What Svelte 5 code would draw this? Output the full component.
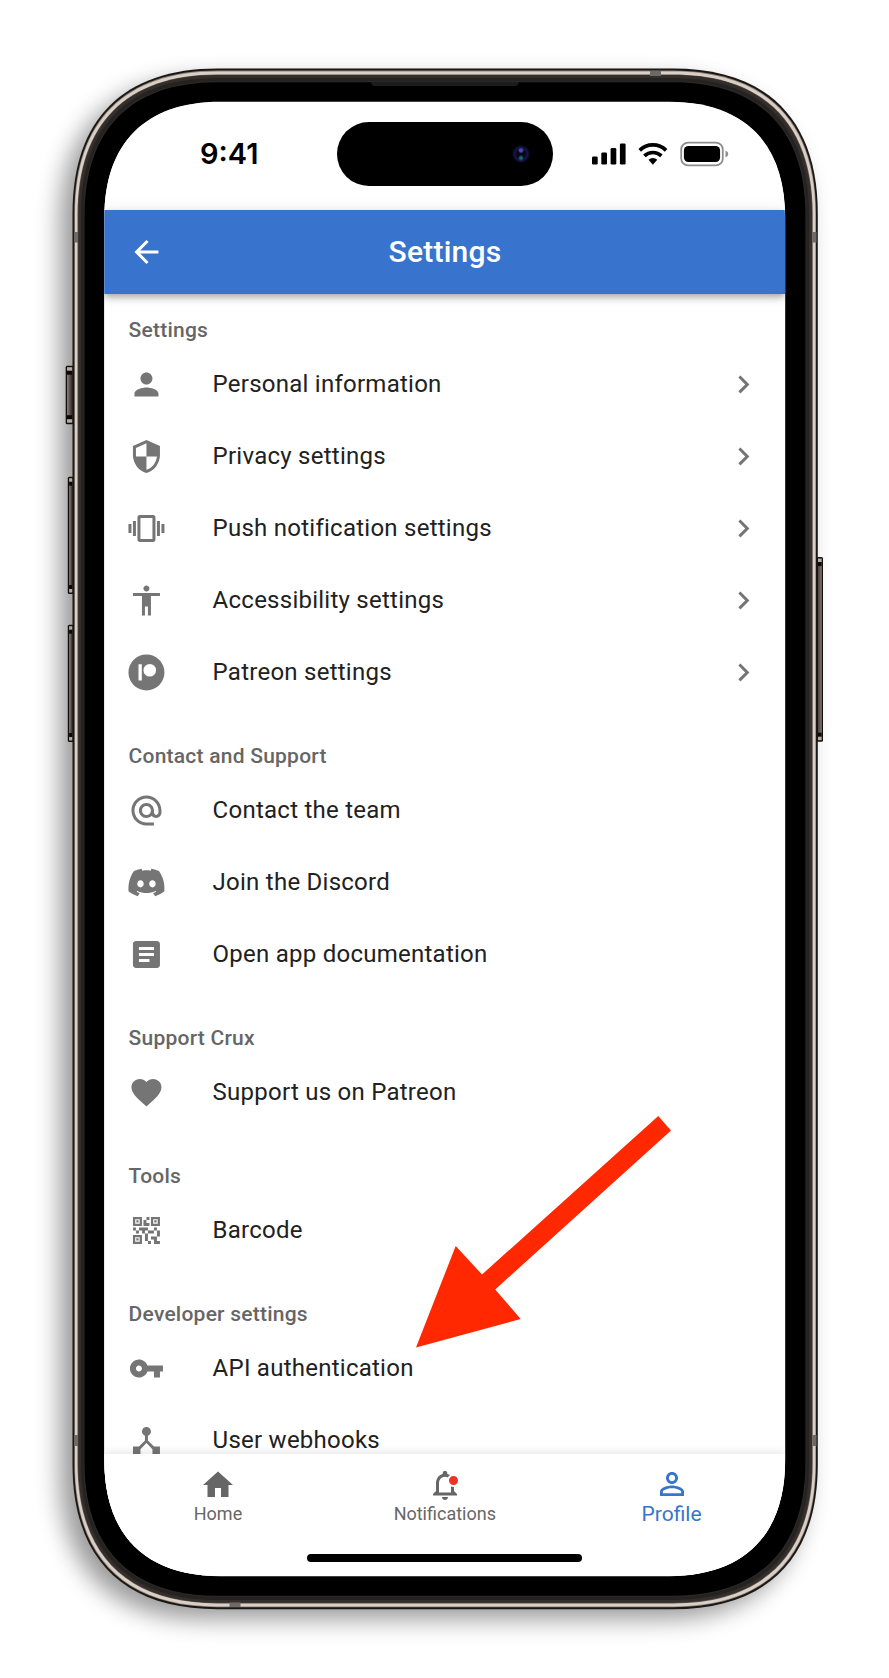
<script>
  // Rounded rectangle with continuous-curvature corners.
  function squircle(x0, y0, x1, y1, r, c) {
    const k = r * (1 - c);
    return `M${x0 + r} ${y0}H${x1 - r}C${x1 - k} ${y0} ${x1} ${y0 + k} ${x1} ${y0 + r}V${y1 - r}C${x1} ${y1 - k} ${x1 - k} ${y1} ${x1 - r} ${y1}H${x0 + r}C${x0 + k} ${y1} ${x0} ${y1 - k} ${x0} ${y1 - r}V${y0 + r}C${x0} ${y0 + k} ${x0 + k} ${y0} ${x0 + r} ${y0}Z`;
  }

  const layers = [
    { d: squircle(72.5, 68.6, 817.8, 1609.2, 145, 0.65), fill: '#1b1714' },
    { d: squircle(74.3, 70.6, 816, 1607.2, 143, 0.65), fill: '#8f857c' },
    { d: squircle(75, 71.4, 815.3, 1606.4, 142.3, 0.65), fill: '#d9cfc6' },
    { d: squircle(77.5, 74.4, 812.7, 1603.4, 140, 0.65), fill: '#5a514b' },
    { d: squircle(78.3, 75.1, 811.9, 1602.7, 139, 0.65), fill: '#332e2b' },
    { d: squircle(81, 78, 809, 1600, 136.5, 0.65), fill: '#252220' },
    { d: squircle(83.4, 81, 806.6, 1597, 134, 0.65), fill: '#2a2929' },
    { d: squircle(84.6, 82.2, 805.4, 1595.8, 133, 0.65), fill: '#000' },
    { d: squircle(104.3, 101.8, 785.2, 1576.2, 116, 0.645), fill: '#fff' }
  ];
  const screenClip = squircle(0.3, 0, 681, 1474, 116, 0.645);

  const bands = [
    [650, 71, 11, 5], [229.5, 1602.5, 11, 4.5],
    [74, 232, 4, 10.5], [812.5, 232, 4, 10.5],
    [74, 1435, 4, 11], [812.5, 1435, 4, 11]
  ];
  const keys = [
    { x: 65.7, y: 365.7, w: 8, h: 58.5 },
    { x: 67.8, y: 476.7, w: 6, h: 117.3 },
    { x: 67.8, y: 624.7, w: 6, h: 117.3 },
    { x: 816.7, y: 557, w: 6.3, h: 184.7 }
  ];

  const icons = {
    back: 'M20 11H7.83l5.59-5.59L12 4l-8 8 8 8 1.41-1.41L7.83 13H20v-2z',
    chevron: 'M10 6L8.59 7.41 13.17 12l-4.58 4.59L10 18l6-6z',
    person: 'M12 12c2.21 0 4-1.79 4-4s-1.79-4-4-4-4 1.79-4 4 1.79 4 4 4zm0 2c-2.67 0-8 1.34-8 4v2h16v-2c0-2.66-5.33-4-8-4z',
    shield: 'M12 1L3 5v6c0 5.55 3.84 10.74 9 12 5.16-1.26 9-6.45 9-12V5l-9-4zm0 10.99h7c-.53 4.12-3.28 7.79-7 8.94V12H5V6.3l7-3.11v8.8z',
    vibration: 'M0 15h2V9H0v6zm3 2h2V7H3v10zm19-8v6h2V9h-2zm-3 8h2V7h-2v10zM16.5 3h-9C6.67 3 6 3.67 6 4.5v15c0 .83.67 1.5 1.5 1.5h9c.83 0 1.5-.67 1.5-1.5v-15c0-.83-.67-1.5-1.5-1.5zM16 19H8V5h8v14z',
    accessibility: 'M12 2c1.1 0 2 .9 2 2s-.9 2-2 2-2-.9-2-2 .9-2 2-2zm9 7h-6v13h-2v-6h-2v6H9V9H3V7h18v2z',
    patreon: 'M12 0a12 12 0 1 0 0 24a12 12 0 1 0 0-24zM6.7 6.5h2.2v10.9H6.7zM14.2 6.3a4.2 4.2 0 1 1 0 8.4a4.2 4.2 0 1 1 0-8.4z',
    email: 'M12 1.95c-5.52 0-10 4.48-10 10s4.48 10 10 10h5v-2h-5c-4.34 0-8-3.66-8-8s3.66-8 8-8 8 3.66 8 8v1.43c0 .79-.71 1.57-1.5 1.57s-1.5-.78-1.5-1.57v-1.43c0-2.76-2.24-5-5-5s-5 2.24-5 5 2.24 5 5 5c1.38 0 2.64-.56 3.54-1.47.65.89 1.77 1.47 2.96 1.47 1.97 0 3.5-1.6 3.5-3.57v-1.43c0-5.52-4.48-10-10-10zm0 13c-1.66 0-3-1.34-3-3s1.34-3 3-3 3 1.34 3 3-1.34 3-3 3z',
    discord: 'M20.317 4.3698a19.7913 19.7913 0 00-4.8851-1.5152.0741.0741 0 00-.0785.0371c-.211.3753-.4447.8648-.6083 1.2495-1.8447-.2762-3.68-.2762-5.4868 0-.1636-.3933-.4058-.8742-.6177-1.2495a.077.077 0 00-.0785-.037 19.7363 19.7363 0 00-4.8852 1.515.0699.0699 0 00-.0321.0277C.5334 9.0458-.319 13.5799.0992 18.0578a.0824.0824 0 00.0312.0561c2.0528 1.5076 4.0413 2.4228 5.9929 3.0294a.0777.0777 0 00.0842-.0276c.4616-.6304.8731-1.2952 1.226-1.9942a.076.076 0 00-.0416-.1057c-.6528-.2476-1.2743-.5495-1.8722-.8923a.077.077 0 01-.0076-.1277c.1258-.0943.2517-.1923.3718-.2914a.0743.0743 0 01.0776-.0105c3.9278 1.7933 8.18 1.7933 12.0614 0a.0739.0739 0 01.0785.0095c.1202.099.246.1981.3728.2924a.077.077 0 01-.0066.1276 12.2986 12.2986 0 01-1.873.8914.0766.0766 0 00-.0407.1067c.3604.698.7719 1.3628 1.225 1.9932a.076.076 0 00.0842.0286c1.961-.6067 3.9495-1.5219 6.0023-3.0294a.077.077 0 00.0313-.0552c.5004-5.177-.8382-9.6739-3.5485-13.6604a.061.061 0 00-.0312-.0286zM8.02 15.3312c-1.1825 0-2.1569-1.0857-2.1569-2.419 0-1.3332.9555-2.4189 2.157-2.4189 1.2108 0 2.1757 1.0952 2.1568 2.419 0 1.3332-.9555 2.4189-2.1569 2.4189zm7.9748 0c-1.1825 0-2.1569-1.0857-2.1569-2.419 0-1.3332.9554-2.4189 2.1569-2.4189 1.2108 0 2.1757 1.0952 2.1568 2.419 0 1.3332-.946 2.4189-2.1568 2.4189Z',
    article: 'M19 3H5c-1.1 0-2 .9-2 2v14c0 1.1.9 2 2 2h14c1.1 0 2-.9 2-2V5c0-1.1-.9-2-2-2zm-5 14H7v-2h7v2zm3-4H7v-2h10v2zm0-4H7V7h10v2z',
    heart: 'M12 21.35l-1.45-1.32C5.4 15.36 2 12.28 2 8.5 2 5.42 4.42 3 7.5 3c1.74 0 3.41.81 4.5 2.09C13.09 3.81 14.76 3 16.5 3 19.58 3 22 5.42 22 8.5c0 3.78-3.4 6.86-8.55 11.54L12 21.35z',
    qr: 'M15 21h-2v-2h2v2zm-2-7h-2v5h2v-5zm8-2h-2v4h2v-4zm-2-2h-2v2h2v-2zM7 12H5v2h2v-2zm-2-2H3v2h2v-2zm7-5h2V3h-2v2zm-7.5-.5v3h3v-3h-3zM9 9H3V3h6v6zm-4.5 7.5v3h3v-3h-3zM9 21H3v-6h6v6zm7.5-16.5v3h3v-3h-3zM21 9h-6V3h6v6zm-2 10v-3h-4v2h2v3h4v-2h-2zm-2-7h-4v2h4v-2zm-4-2H7v2h2v2h2v-2h2v-2zm1-1V7h-2V5h-2v4h4zM6.75 5.25h-1.5v1.5h1.5v-1.5zm0 12h-1.5v1.5h1.5v-1.5zm12-12h-1.5v1.5h1.5v-1.5z',
    key: 'M12.65 10C11.83 7.67 9.61 6 7 6c-3.31 0-6 2.69-6 6s2.69 6 6 6c2.61 0 4.83-1.67 5.65-4H17v4h4v-4h2v-4H12.65zM7 14c-1.1 0-2-.9-2-2s.9-2 2-2 2 .9 2 2-.9 2-2 2z',
    hub: 'M17 16l-4-4V8.82C14.16 8.4 15 7.3 15 6c0-1.66-1.34-3-3-3S9 4.34 9 6c0 1.3.84 2.4 2 2.82V12l-4 4H3v5h5v-3.05l4-4.2 4 4.2V21h5v-5h-4z',
    home: 'M10 20v-6h4v6h5v-8h3L12 3 2 12h3v8z',
    bell: 'M12 22c1.1 0 2-.9 2-2h-4c0 1.1.89 2 2 2zm6-6v-5c0-3.07-1.64-5.64-4.5-6.32V4c0-.83-.67-1.5-1.5-1.5s-1.5.67-1.5 1.5v.68C7.63 5.36 6 7.92 6 11v5l-2 2v1h16v-1l-2-2zm-2 1H8v-6c0-2.48 1.51-4.5 4-4.5s4 2.02 4 4.5v6z',
    profile: 'M12 5.9c1.16 0 2.1.94 2.1 2.1s-.94 2.1-2.1 2.1S9.9 9.16 9.9 8s.94-2.1 2.1-2.1m0 9c2.97 0 6.1 1.46 6.1 2.1v1.1H5.9V17c0-.64 3.13-2.1 6.1-2.1M12 4C9.79 4 8 5.79 8 8s1.79 4 4 4 4-1.79 4-4-1.79-4-4-4zm0 9c-2.67 0-8 1.34-8 4v3h16v-3c0-2.66-5.33-4-8-4z'
  };

  const sections = [
    {
      title: 'Settings',
      items: [
        { icon: 'person', label: 'Personal information', nested: true },
        { icon: 'shield', label: 'Privacy settings', nested: true },
        { icon: 'vibration', label: 'Push notification settings', nested: true },
        { icon: 'accessibility', label: 'Accessibility settings', nested: true },
        { icon: 'patreon', label: 'Patreon settings', nested: true }
      ]
    },
    {
      title: 'Contact and Support',
      items: [
        { icon: 'email', label: 'Contact the team' },
        { icon: 'discord', label: 'Join the Discord' },
        { icon: 'article', label: 'Open app documentation' }
      ]
    },
    { title: 'Support Crux', items: [{ icon: 'heart', label: 'Support us on Patreon' }] },
    { title: 'Tools', items: [{ icon: 'qr', label: 'Barcode' }] },
    {
      title: 'Developer settings',
      items: [
        { icon: 'key', label: 'API authentication' },
        { icon: 'hub', label: 'User webhooks' }
      ]
    }
  ];

  const tabs = [
    { icon: 'home', label: 'Home' },
    { icon: 'bell', label: 'Notifications', badge: true },
    { icon: 'profile', label: 'Profile', active: true }
  ];
</script>

<!-- dx/dy shift the glyph by a fraction of a pixel inside its 36px box -->
{#snippet icon(name, box = '-0.3 -0.3 24 24')}
  <svg class="icon" viewBox={box} aria-hidden="true"><path fill-rule="evenodd" d={icons[name]} /></svg>
{/snippet}

<div class="stage">
  <svg class="device" viewBox="0 0 889 1678" aria-hidden="true">
    <defs>
      <filter id="soft" x="-10%" y="-10%" width="120%" height="120%"><feGaussianBlur stdDeviation="12.5" /></filter>
      <linearGradient id="keyFill" x1="0" x2="1" y1="0" y2="0">
        <stop offset="0" stop-color="#8d8079" /><stop offset=".35" stop-color="#6b615c" /><stop offset="1" stop-color="#2c2725" />
      </linearGradient>
      <linearGradient id="keyFillR" x1="1" x2="0" y1="0" y2="0">
        <stop offset="0" stop-color="#8d8079" /><stop offset=".35" stop-color="#6b615c" /><stop offset="1" stop-color="#4c4542" />
      </linearGradient>
    </defs>
    <path class="shade" filter="url(#soft)" d={squircle(60, 80, 806, 1619, 145, 0.65)} />
    {#each keys as k, i}
      <rect x={k.x} y={k.y} width={k.w} height={k.h} rx="1.5" fill="#120e0c" />
      <rect x={k.x + 1.3} y={k.y + 1.5} width={k.w - 2.6} height={k.h - 3} fill="#b5aba2" />
      <rect x={k.x + 1.3} y={k.y + 5} width={k.w - 2.6} height={k.h - 10} fill="#0b0908" />
      <rect x={k.x + 1.3} y={k.y + 9} width={k.w - 2.6} height={k.h - 18} fill={i === 3 ? 'url(#keyFillR)' : 'url(#keyFill)'} />
    {/each}
    {#each layers as l}
      <path d={l.d} fill={l.fill} />
    {/each}
    {#each bands as [x, y, w, h]}
      <rect {x} {y} width={w} height={h} fill="#6d6966" />
    {/each}
    <path d="M371 82H519Q518.5 86 515 86H375Q371.5 86 371 82Z" fill="#1d1c1c" />
  </svg>

  <main class="screen" style:clip-path={`path("${screenClip}")`}>
    <div class="status">
      <span class="clock">9:41</span>
      <div class="island"><span class="lens"></span></div>
      <svg class="signals" viewBox="0 0 138 26" aria-hidden="true">
        <rect x="1" y="15.5" width="5.7" height="8" rx="1.3" />
        <rect x="10.3" y="11.5" width="5.7" height="12" rx="1.3" />
        <rect x="19.6" y="7" width="5.7" height="16.5" rx="1.3" />
        <rect x="28.9" y="2.5" width="5.7" height="21" rx="1.3" />
        <g fill="none" stroke="#000" stroke-width="3.7">
          <path d="M48.7 9.3a19 19 0 0 1 26.4 0" />
          <path d="M53.4 14.9a12.3 12.3 0 0 1 17 0" />
        </g>
        <path d="M57.5 18.8a6.5 6.5 0 0 1 8.8 0L61.9 23.7Z" />
        <rect x="90.2" y="1.6" width="41.6" height="22.8" rx="7" fill="none" stroke="#8d8d8d" stroke-width="1.8" />
        <rect x="92.9" y="4.9" width="36.2" height="16.2" rx="4.5" />
        <path d="M134.5 9.5Q137.3 10.5 137.3 13T134.5 16.5Z" fill="#8d8d8d" />
      </svg>
    </div>

    <header class="bar">
      {@render icon('back', '-0.3 0 24 24')}
      <h1>Settings</h1>
    </header>

    <div class="list">
      {#each sections as s}
        <section>
          <h2>{s.title}</h2>
          {#each s.items as item}
            <div class="row">
              {@render icon(item.icon)}
              <span class="label">{item.label}</span>
              {#if item.nested}{@render icon('chevron')}{/if}
            </div>
          {/each}
        </section>
      {/each}
    </div>

    <footer>
      <nav>
        {#each tabs as t}
          <div class="tab" class:active={t.active}>
            <div class="glyph">
              {@render icon(t.icon, '0 0 24 24')}
              {#if t.badge}<span class="badge"></span>{/if}
            </div>
            <span>{t.label}</span>
          </div>
        {/each}
      </nav>
      <div class="grip"></div>
    </footer>
  </main>

  <svg class="pointer" viewBox="0 0 256 232" aria-hidden="true">
    <path d="M0 231.5L39.7 130L66 158.5L242.3 0L255 14.5L79.2 173.5L104.7 203Z" fill="#ff2800" />
  </svg>
</div>

<style>
  :global(body) { background: #fff; }
  .stage {
    position: relative;
    box-sizing: border-box;
    width: 889px;
    height: 1678px;
    padding: 102px 0 0 104px;
    overflow: hidden;
    font-family: Roboto, "Liberation Sans", sans-serif;
  }
  .device { position: absolute; inset: 0; width: 889px; height: 1678px; }
  .shade { fill: #000; opacity: 0.4; }
  .screen {
    position: relative;
    display: flex;
    flex-direction: column;
    width: 681px;
    height: 1474px;
    background: #fff;
  }
  .icon { display: block; flex: none; width: 36px; height: 36px; fill: currentColor; overflow: visible; }
  .status {
    box-sizing: border-box;
    display: flex;
    align-items: flex-start;
    height: 108px;
    flex: none;
    padding: 20.4px 0 0 96px;
  }
  .clock {
    width: 136.8px;
    padding-top: 14px;
    font: 600 29px/36px Inter, "Liberation Sans", sans-serif;
    color: #000;
  }
  .island {
    display: flex;
    align-items: center;
    justify-content: flex-end;
    box-sizing: border-box;
    width: 216px;
    height: 63.6px;
    padding-right: 22.5px;
    border-radius: 32px;
    background: #000;
  }
  .lens {
    width: 18px;
    height: 18px;
    border-radius: 50%;
    background:
      radial-gradient(circle at 50% 30%, #4a48a8 0 1.5px, transparent 3px),
      radial-gradient(circle at 50% 72%, #1a6a70 0 1px, transparent 3px),
      radial-gradient(circle, #06061c 0 4px, #15154a 6.5px, #030308 9px);
  }
  .signals { width: 138px; height: 26px; margin: 18.6px 0 0 38.2px; }
  .bar {
    position: relative;
    z-index: 1;
    display: grid;
    grid-template-columns: 36px 1fr 36px;
    align-items: center;
    height: 84px;
    flex: none;
    box-sizing: border-box;
    padding: 0 23.5px 0 24.4px;
    background: #3874cd;
    color: #fff;
    box-shadow: 0 3px 6px -1px rgba(0, 0, 0, 0.24), 0 5px 8px rgba(0, 0, 0, 0.1), 0 1px 14px rgba(0, 0, 0, 0.1);
  }
  h1 { margin: 0; text-align: center; font-size: 30px; font-weight: 500; line-height: 36px; letter-spacing: 0.225px; }
  .list { flex: 1; min-height: 0; overflow: hidden; }
  section { padding: 18px 24px 12px; }
  h2 { margin: 0 0 0 0.6px; font-size: 21px; font-weight: 500; line-height: 36px; letter-spacing: 0.23px; color: #666; }
  .row { display: flex; align-items: center; height: 72px; color: #757575; }
  .label { flex: 1; margin-left: 48.6px; font-size: 24px; line-height: 36px; letter-spacing: 0.25px; color: #212121; }
  footer {
    position: relative;
    flex: none;
    height: 122.5px;
    background: #fff;
    box-shadow: 0 -1px 9px rgba(0, 0, 0, 0.12);
  }
  nav { display: grid; grid-template-columns: repeat(3, 1fr); height: 84px; padding-left: 0.6px; }
  .tab {
    display: flex;
    flex-direction: column;
    align-items: center;
    justify-content: center;
    color: #666;
    font-size: 18px;
    line-height: normal;
  }
  .tab.active { font-size: 21px; color: #3874cd; }
  .glyph { position: relative; }
  .badge {
    position: absolute;
    top: 7px;
    left: 20.5px;
    width: 9px;
    height: 9px;
    border: 2px solid #fff;
    border-radius: 50%;
    background: #ee3224;
  }
  .grip { width: 275px; height: 8px; margin: 16px auto 0; border-radius: 4px; background: #000; }
  .pointer { position: absolute; left: 416px; top: 1116px; width: 256px; height: 232px; }
</style>
